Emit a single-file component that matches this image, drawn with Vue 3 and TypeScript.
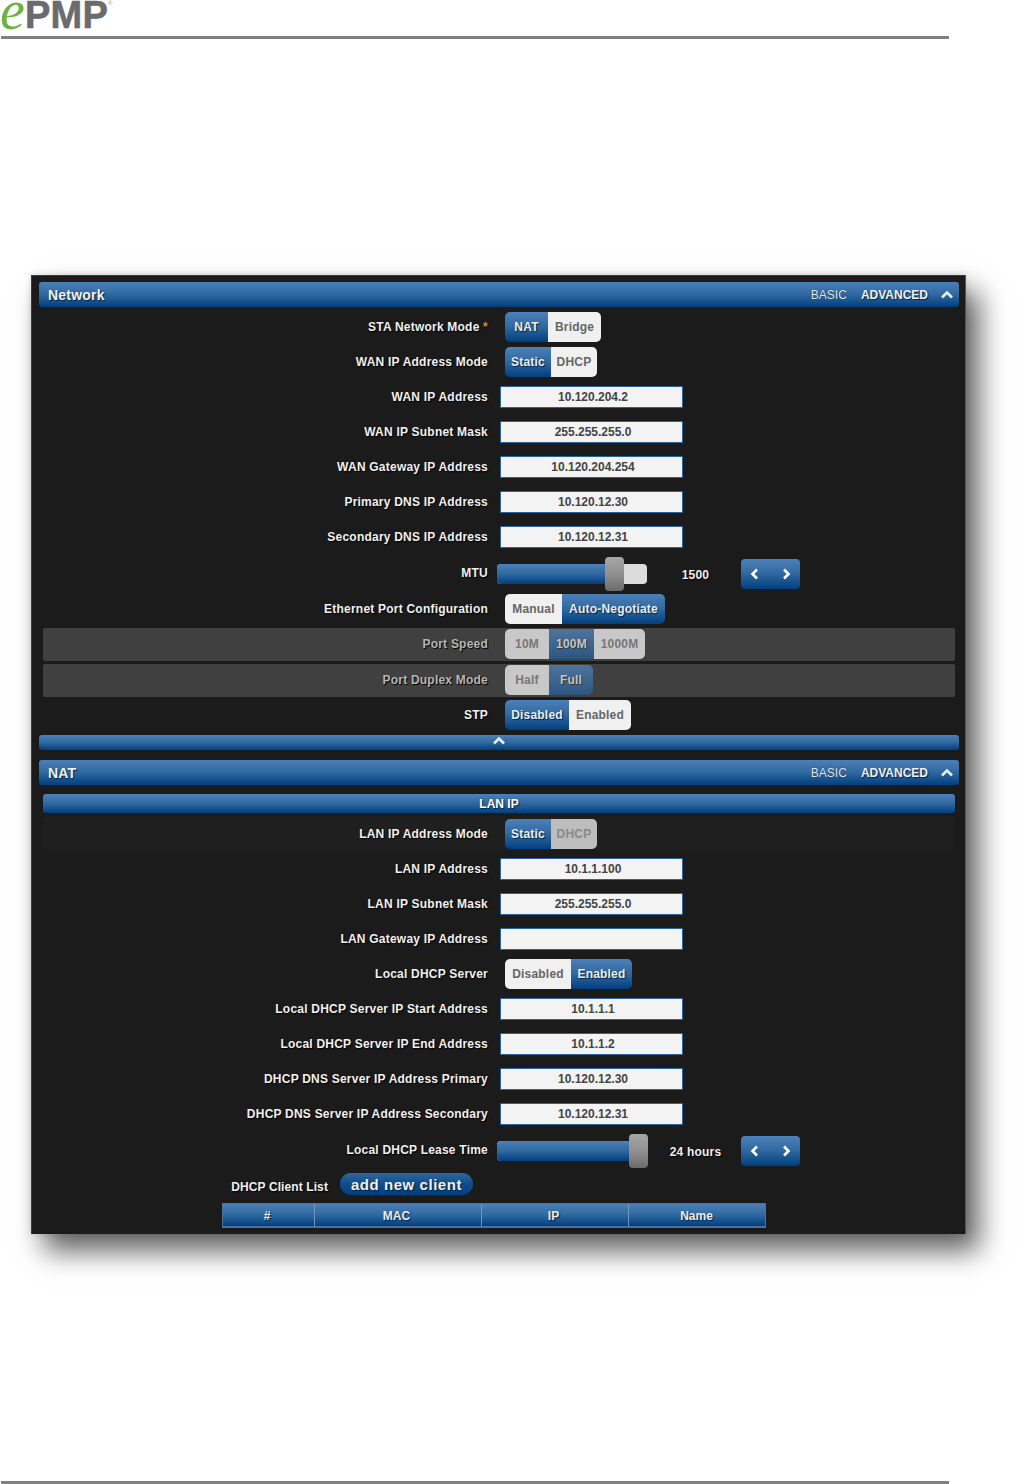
<script setup lang="ts">
type Seg = { t: string; on?: boolean; w: number };
type Row = {
  label: string;
  star?: boolean;
  input?: string;
  segs?: Seg[];
  slider?: { fill: number; value: string };
  kind?: string;
};

const network: Row[] = [
  { label: 'STA Network Mode', star: true, segs: [{ t: 'NAT', on: true, w: 43 }, { t: 'Bridge', w: 53 }] },
  { label: 'WAN IP Address Mode', segs: [{ t: 'Static', on: true, w: 46 }, { t: 'DHCP', w: 46 }] },
  { label: 'WAN IP Address', input: '10.120.204.2' },
  { label: 'WAN IP Subnet Mask', input: '255.255.255.0' },
  { label: 'WAN Gateway IP Address', input: '10.120.204.254' },
  { label: 'Primary DNS IP Address', input: '10.120.12.30' },
  { label: 'Secondary DNS IP Address', input: '10.120.12.31' },
  { label: 'MTU', slider: { fill: 108, value: '1500' }, kind: 'tall' },
  { label: 'Ethernet Port Configuration', kind: 'tall raised', segs: [{ t: 'Manual', w: 57 }, { t: 'Auto-Negotiate', on: true, w: 103 }] },
  { label: 'Port Speed', kind: 'dim', segs: [{ t: '10M', w: 44 }, { t: '100M', on: true, w: 45 }, { t: '1000M', w: 51 }] },
  { label: 'Port Duplex Mode', kind: 'dim', segs: [{ t: 'Half', w: 44 }, { t: 'Full', on: true, w: 44 }] },
  { label: 'STP', segs: [{ t: 'Disabled', on: true, w: 64 }, { t: 'Enabled', w: 62 }] },
];

const nat: Row[] = [
  { label: 'LAN IP Address', input: '10.1.1.100' },
  { label: 'LAN IP Subnet Mask', input: '255.255.255.0' },
  { label: 'LAN Gateway IP Address', input: '' },
  { label: 'Local DHCP Server', segs: [{ t: 'Disabled', w: 66 }, { t: 'Enabled', on: true, w: 61 }] },
  { label: 'Local DHCP Server IP Start Address', input: '10.1.1.1' },
  { label: 'Local DHCP Server IP End Address', input: '10.1.1.2' },
  { label: 'DHCP DNS Server IP Address Primary', input: '10.120.12.30' },
  { label: 'DHCP DNS Server IP Address Secondary', input: '10.120.12.31' },
  { label: 'Local DHCP Lease Time', slider: { fill: 132, value: '24 hours' }, kind: 'tall' },
];

const columns = [
  { t: '#', w: 92 },
  { t: 'MAC', w: 167 },
  { t: 'IP', w: 147 },
  { t: 'Name', w: 138 },
];
</script>

<template>
  <div class="page">
    <header class="brand">
      <span class="brand-e">e</span><span class="brand-name">PMP</span><span class="brand-tm">®</span>
    </header>

    <main class="panel">
      <div class="bar section">
        <span class="section-title">Network</span>
        <span class="tabs">
          <span class="basic">BASIC</span>
          <span class="advanced">ADVANCED</span>
          <svg class="chev" width="12" height="8" viewBox="0 0 12 8"><path d="M1 6.500 6 1.500l5 5" /></svg>
        </span>
      </div>

      <div class="rows">
        <div v-for="r in network" :key="r.label" class="row" :class="r.kind">
          <div class="label">{{ r.label }}<span v-if="r.star" class="star"> *</span></div>
          <div v-if="r.input !== undefined" class="input">{{ r.input }}</div>
          <div v-if="r.segs" class="switch">
            <span v-for="s in r.segs" :key="s.t" class="seg" :class="{ on: s.on }" :style="{ width: s.w + 'px' }">{{ s.t }}</span>
          </div>
          <template v-if="r.slider">
            <div class="slider">
              <div class="fill" :style="{ width: r.slider.fill + 10 + 'px' }"></div>
              <div class="knob" :style="{ left: r.slider.fill + 'px' }"></div>
            </div>
            <div class="value">{{ r.slider.value }}</div>
            <div class="stepper">
              <svg width="10" height="12" viewBox="0 0 10 12"><path d="M7 1.500 2.500 6 7 10.500" /></svg>
              <svg width="10" height="12" viewBox="0 0 10 12"><path d="M3 1.500 7.500 6 3 10.500" /></svg>
            </div>
          </template>
        </div>
      </div>

      <div class="bar collapse">
        <svg class="chev small" width="12" height="8" viewBox="0 0 12 8"><path d="M1 6.500 6 1.500l5 5" /></svg>
      </div>

      <div class="bar section nat-head">
        <span class="section-title">NAT</span>
        <span class="tabs">
          <span class="basic">BASIC</span>
          <span class="advanced">ADVANCED</span>
          <svg class="chev" width="12" height="8" viewBox="0 0 12 8"><path d="M1 6.500 6 1.500l5 5" /></svg>
        </span>
      </div>

      <div class="rows nat-rows">
        <div class="bar sub">LAN IP</div>
        <div class="row shaded">
          <div class="label">LAN IP Address Mode</div>
          <div class="switch">
            <span class="seg on" style="width: 46px">Static</span>
            <span class="seg off" style="width: 46px">DHCP</span>
          </div>
        </div>
        <div v-for="r in nat" :key="r.label" class="row" :class="r.kind">
          <div class="label">{{ r.label }}</div>
          <div v-if="r.input !== undefined" class="input">{{ r.input }}</div>
          <div v-if="r.segs" class="switch">
            <span v-for="s in r.segs" :key="s.t" class="seg" :class="{ on: s.on }" :style="{ width: s.w + 'px' }">{{ s.t }}</span>
          </div>
          <template v-if="r.slider">
            <div class="slider">
              <div class="fill" :style="{ width: r.slider.fill + 10 + 'px' }"></div>
              <div class="knob" :style="{ left: r.slider.fill + 'px' }"></div>
            </div>
            <div class="value">{{ r.slider.value }}</div>
            <div class="stepper">
              <svg width="10" height="12" viewBox="0 0 10 12"><path d="M7 1.500 2.500 6 7 10.500" /></svg>
              <svg width="10" height="12" viewBox="0 0 10 12"><path d="M3 1.500 7.500 6 3 10.500" /></svg>
            </div>
          </template>
        </div>

        <div class="client-row">
          <div class="client-label">DHCP Client List</div>
          <div class="pill">add new client</div>
        </div>
        <div class="client-table">
          <div v-for="c in columns" :key="c.t" class="th" :style="{ width: c.w + 'px' }">{{ c.t }}</div>
        </div>
      </div>
    </main>

    <footer class="foot"></footer>
  </div>
</template>

<style>
html,
body {
  margin: 0;
  background: #fff;
}
</style>

<style scoped>
.page {
  width: 1028px;
  height: 1484px;
  position: relative;
  overflow: hidden;
  font-family: "Liberation Sans", Arial, sans-serif;
  font-size: 12px;
  background: #fff;
}

.brand {
  width: 948px;
  height: 36px;
  margin-left: 1px;
  border-bottom: 3px solid #808080;
  display: flex;
  align-items: flex-start;
  overflow: hidden;
}
.brand-e {
  font-family: "Liberation Serif", serif;
  font-style: italic;
  font-size: 56px;
  line-height: 36px;
  height: 36px;
  color: #6cb33f;
  margin-left: -1px;
  margin-top: -8px;
  width: 25px;
}
.brand-name {
  font-weight: 700;
  font-size: 38px;
  line-height: 30px;
  height: 30px;
  color: #6a6b6e;
  letter-spacing: 0.2px;
  -webkit-text-stroke: 0.6px #6a6b6e;
}
.brand-tm {
  font-size: 6px;
  line-height: 6px;
  color: #999;
}

.panel {
  width: 935px;
  height: 959px;
  margin: 236px 0 0 31px;
  box-sizing: border-box;
  padding: 6px 7px 0 8px;
  background: #1b1b1b;
  border-top: 1px solid #3a3a3a;
  border-left: 1px solid #3a3a3a;
  border-right: 1px solid #555;
  box-shadow: 13px 17px 26px rgba(0, 0, 0, 0.62), 0 0 7px rgba(0, 0, 0, 0.14);
}

.bar {
  background: linear-gradient(#4c80b9, #2f689f 50%, #003f7f);
  border-radius: 3px;
  color: #fff;
}
.section {
  height: 25px;
  margin-left: -1px;
  margin-right: -1px;
  display: flex;
  align-items: center;
  justify-content: space-between;
  padding: 0 6px 0 9px;
}
.section-title {
  font-size: 14px;
  font-weight: 700;
  letter-spacing: 0.2px;
  color: #f2f2f2;
  text-shadow: 1px 1px 1px #0b2340;
}
.tabs {
  display: flex;
  align-items: center;
}
.basic {
  color: #dfe7f0;
  text-shadow: 0 0 1px #0b2340;
}
.advanced {
  margin-left: 14px;
  font-weight: 700;
  color: #f0f0f0;
  text-shadow: 1px 1px 1px #0b2340;
}
svg path {
  fill: none;
  stroke: #fff;
  stroke-width: 2.600;
}
.chev {
  margin-left: 13px;
}
.chev path {
  stroke: #e6ecf3;
}

.rows {
  margin-top: 2px;
  padding: 0 3px;
}
.nat-rows {
  margin-top: 0;
}
.row {
  height: 35px;
  display: flex;
  align-items: center;
}
.row.tall {
  height: 37px;
}
.row.raised {
  box-sizing: border-box;
  padding-bottom: 2px;
}
.row.dim {
  height: 33px;
  box-sizing: border-box;
  padding-bottom: 1px;
  margin-bottom: 3px;
  background: #404040;
  border-radius: 2px;
}
.row.dim + .row.dim {
  margin-bottom: 0;
}
.row.shaded {
  height: 33px;
  margin-top: 4px;
  margin-bottom: 1px;
  background: #1f1f1f;
  border-radius: 3px;
}
.label {
  width: 445px;
  flex: none;
  text-align: right;
  font-weight: 700;
  letter-spacing: 0.22px;
  color: #f0f0f0;
  text-shadow: 1px 1px 1px #000;
  white-space: nowrap;
}
.dim .label {
  color: #b5b5b5;
}
.star {
  color: #e08a1e;
}

.input {
  margin-left: 12px;
  width: 183px;
  height: 22px;
  box-sizing: border-box;
  border: 1px solid #2a649c;
  border-radius: 1px;
  background: #f3f3f3;
  color: #444;
  font-weight: 700;
  line-height: 20px;
  text-align: center;
  padding-left: 3px;
}

.switch {
  margin-left: 17px;
  display: flex;
  height: 30px;
  border-radius: 5px;
  overflow: hidden;
}
.seg {
  display: flex;
  align-items: center;
  justify-content: center;
  font-weight: 700;
  letter-spacing: 0.2px;
  color: #666;
  background: #f0f0f0;
}
.seg.on {
  color: #e9edf2;
  background: linear-gradient(#4c80b9, #2f689f 50%, #003f7f);
  text-shadow: 1px 1px 1px #0b2340;
}
.seg.off {
  color: #8a8a8a;
  background: #bdbdbd;
}
.dim .seg {
  color: #777;
  background: #c8c8c8;
}
.dim .seg.on {
  color: #c4c4c4;
  background: linear-gradient(#4f739c, #3f6690 50%, #2c5580);
  text-shadow: 1px 1px 1px #333;
}

.slider {
  margin: 2px 0 0 9px;
  position: relative;
  width: 150px;
  height: 20px;
  background: #dcdcdc;
  border-radius: 4px;
}
.fill {
  position: absolute;
  left: 0;
  top: 0;
  bottom: 0;
  border-radius: 4px 0 0 4px;
  background: linear-gradient(#4c80b9, #2f689f 50%, #003f7f);
}
.knob {
  position: absolute;
  top: -7px;
  width: 19px;
  height: 34px;
  border-radius: 4px;
  background: linear-gradient(#a6a6a6, #8e8e8e 55%, #6a6a6a);
}
.value {
  width: 94px;
  flex: none;
  box-sizing: border-box;
  margin-top: 2px;
  padding: 2px 0 0 3px;
  text-align: center;
  font-weight: 700;
  letter-spacing: 0.2px;
  color: #eee;
  text-shadow: 1px 1px 1px #000;
}
.stepper {
  width: 59px;
  height: 30px;
  margin-top: 2px;
  box-sizing: border-box;
  padding: 0 9px;
  border-radius: 4px;
  display: flex;
  align-items: center;
  justify-content: space-between;
  background: linear-gradient(#4c80b9, #2f689f 50%, #003f7f);
}

.collapse {
  margin: 3px -1px 0;
  height: 15px;
  display: flex;
  justify-content: center;
  align-items: flex-start;
  padding-top: 2px;
  box-sizing: border-box;
}
.chev.small {
  margin-left: 0;
}
.nat-head {
  margin-top: 10px;
}
.sub {
  margin-top: 9px;
  height: 19px;
  line-height: 20px;
  text-align: center;
  font-weight: 700;
  text-shadow: 1px 1px 1px #0b2340;
}

.client-row {
  height: 35px;
  display: flex;
  align-items: flex-start;
}
.client-label {
  width: 285px;
  flex: none;
  text-align: right;
  font-weight: 700;
  letter-spacing: 0.1px;
  color: #f0f0f0;
  text-shadow: 1px 1px 1px #000;
  padding-top: 12px;
}
.pill {
  margin: 5px 0 0 12px;
  width: 133px;
  height: 22px;
  border-radius: 11px;
  line-height: 23px;
  text-align: center;
  font-size: 15px;
  font-weight: 700;
  letter-spacing: 0.55px;
  color: #f0f0f0;
  text-shadow: 1px 1px 1px #0b2340;
  background: linear-gradient(#2f689f, #0f4d8b 50%, #003f7f);
}

.client-table {
  margin-left: 179px;
  width: 544px;
  height: 25px;
  display: flex;
  box-sizing: border-box;
  border: 1px solid #4f7099;
  border-bottom-width: 2px;
  background: linear-gradient(#4c80b9, #2f689f 50%, #003f7f);
}
.th {
  flex: none;
  box-sizing: border-box;
  border-right: 1px solid #6f96bf;
  padding-right: 3px;
  text-align: center;
  line-height: 24px;
  font-weight: 700;
  color: #e8edf3;
  text-shadow: 1px 1px 1px #0b2340;
}
.th:last-child {
  border-right: 0;
}

.foot {
  position: absolute;
  left: 1px;
  top: 1481px;
  width: 948px;
  height: 3px;
  background: #808080;
}
</style>
